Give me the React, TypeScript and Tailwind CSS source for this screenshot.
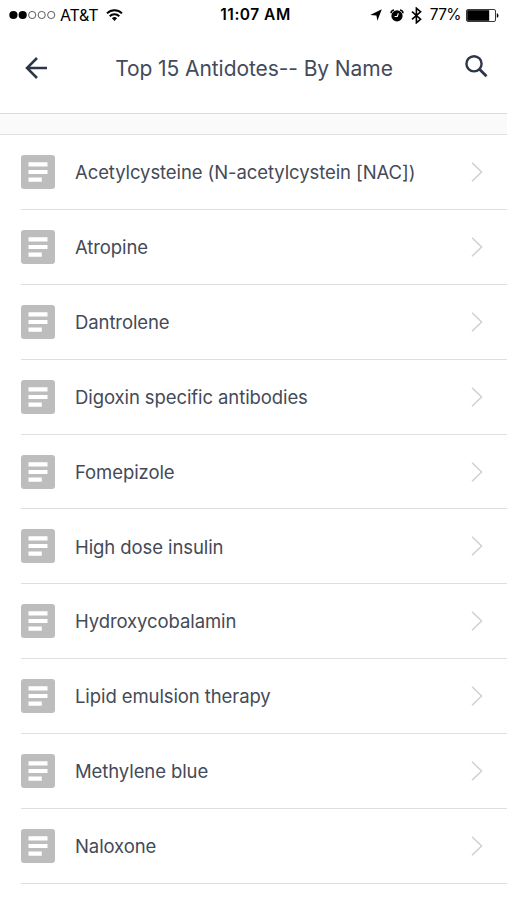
const antidotes = [
    "Acetylcysteine (N-acetylcystein [NAC])",
    "Atropine",
    "Dantrolene",
    "Digoxin specific antibodies",
    "Fomepizole",
    "High dose insulin",
    "Hydroxycobalamin",
    "Lipid emulsion therapy",
    "Methylene blue",
    "Naloxone",
];

function StatusBar() {
    return (
        <div className="grid h-[30px] grid-cols-[1fr_auto_1fr] items-center pl-[9px] pr-[8px] text-[15.5px] leading-none text-black">
            <div className="flex items-center">
                <svg width="47" height="10" viewBox="0 0 47 10">
                    <circle cx="4.4" cy="5" r="4.1" />
                    <circle cx="13.7" cy="5" r="4.1" />
                    <g fill="none" stroke="#333" strokeWidth="0.8">
                        <circle cx="23.2" cy="5" r="3.6" />
                        <circle cx="32.7" cy="5" r="3.6" />
                        <circle cx="42.2" cy="5" r="3.6" />
                    </g>
                </svg>
                <span className="ml-[4px] text-[16px] tracking-[-0.2px]">AT&amp;T</span>
                <svg className="ml-[8px]" width="17" height="12" viewBox="0 0 17 12" fill="none" stroke="#000" strokeWidth="2">
                    <path d="M1 4.4a10.6 10.6 0 0 1 15 0" />
                    <path d="M3.7 7.2a6.8 6.8 0 0 1 9.6 0" />
                    <path d="M8.5 12 5.9 9.3a3.7 3.7 0 0 1 5.2 0z" fill="#000" stroke="none" />
                </svg>
            </div>
            <span className="ml-[3px] text-[15.5px] font-semibold tracking-[0.5px]">11:07 AM</span>
            <div className="flex items-center justify-end">
                <svg width="12" height="12" viewBox="0 0 12 12">
                    <path d="M11.8.2 7.4 11.7 6.4 6.6.2 6z" />
                </svg>
                <svg className="ml-[8px]" width="14" height="13" viewBox="0 0 14 13">
                    <circle cx="7" cy="6.9" r="5.6" />
                    <path d="M1 4.2A3.4 3.4 0 0 1 4 1M10 1a3.4 3.4 0 0 1 3 3.2" fill="none" stroke="#000" strokeWidth="1.5" />
                    <path d="M7.4 7.5H4.6M7.1 7.8 8.4 4.2" stroke="#fff" strokeWidth="1.1" />
                </svg>
                <svg className="ml-[7px]" width="11" height="17" viewBox="0 0 11 17" fill="none" stroke="#000" strokeWidth="1.6">
                    <path d="m1 4.7 8.6 7.5-4.2 3.6V1.2l4.2 3.6L1 12.3" />
                </svg>
                <span className="ml-[8px] tracking-[-0.6px]">77%</span>
                <svg className="ml-[5px]" width="33" height="13" viewBox="0 0 33 13">
                    <rect x=".5" y=".5" width="29" height="12" rx="1.5" fill="none" stroke="#222" strokeWidth="0.9" />
                    <rect x="1.2" y="1.2" width="22" height="10.6" />
                    <path d="M30.8 4.2c2.2.6 2.2 4 0 4.6z" />
                </svg>
            </div>
        </div>
    );
}

function Header() {
    return (
        <div className="flex h-[84px] items-start border-b border-[#dcdcdd] pl-[25px] pr-[19px]">
            <svg className="mt-[27px]" width="23" height="22" viewBox="0 0 23 22" fill="none" stroke="#2d3548" strokeWidth="2.5">
                <path d="M22 11H2.2M12 1 2 11l10 10" />
            </svg>
            <h1 className="flex-1 pr-[5px] pt-[24px] text-center text-[21px] leading-[30px] tracking-[-0.08px] text-[#444a5a]">
                Top 15 Antidotes-- By Name
            </h1>
            <svg className="mt-[25px]" width="23" height="23" viewBox="0 0 23 23" fill="none" stroke="#2d3548">
                <circle cx="9" cy="8.8" r="7.6" strokeWidth="2.4" />
                <path d="m14.5 14.3 7 7" strokeWidth="2.8" />
            </svg>
        </div>
    );
}

function Row({ name }: { name: string }) {
    return (
        <li className="flex h-[74.9px] items-center border-b border-[#dfdfe0] pr-[24px]">
            <svg width="34" height="34" viewBox="0 0 34 34">
                <rect width="34" height="34" rx="3" fill="#bdbdbd" />
                <path d="M7.5 7.2h19v4.2h-19zM7.5 14.9h19v4.2h-19zM7.5 22.6h13.3v4.2H7.5z" fill="#fff" />
            </svg>
            <span className="ml-[20px] flex-1 pt-[2px] text-[18.5px] tracking-[-0.09px] text-[#444a57]">{name}</span>
            <svg width="12" height="20" viewBox="0 0 12 20" fill="none" stroke="#d0d0d3" strokeWidth="1.5">
                <path d="m1 .8 9.6 9.2L1 19.2" />
            </svg>
        </li>
    );
}

export default function App() {
    return (
        <div className="h-[900px] overflow-hidden bg-white font-['Inter',sans-serif]">
            <StatusBar />
            <Header />
            <div className="h-[21px] border-b border-[#e0e0e1] bg-[#fafafa]"></div>
            <ul className="pl-[21px]">
                {antidotes.map((name) => (
                    <Row key={name} name={name} />
                ))}
            </ul>
        </div>
    );
}
